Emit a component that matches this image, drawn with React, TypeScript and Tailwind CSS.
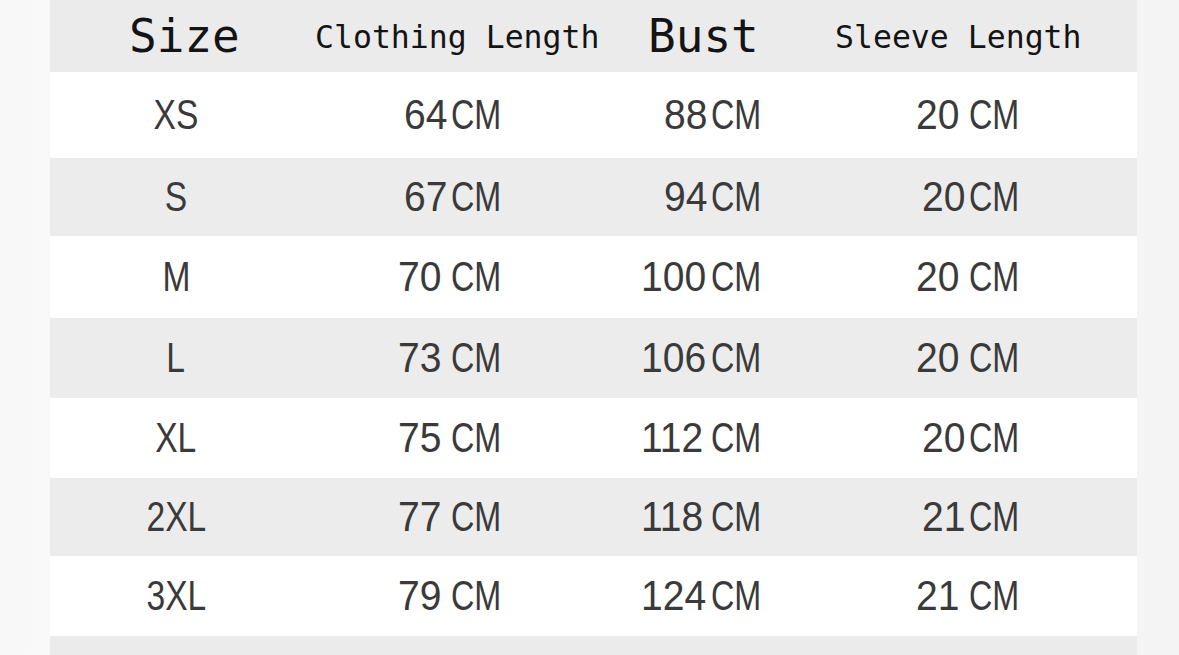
import React from 'react';

const rows = [
  { size: 'XS', len: ['64', false], bust: ['88', false], sleeve: ['20', true], h: 'h-[86px]', gray: false },
  { size: 'S', len: ['67', false], bust: ['94', false], sleeve: ['20', false], h: 'h-[78px]', gray: true },
  { size: 'M', len: ['70', true], bust: ['100', false], sleeve: ['20', true], h: 'h-[82px]', gray: false },
  { size: 'L', len: ['73', true], bust: ['106', false], sleeve: ['20', true], h: 'h-[80px]', gray: true },
  { size: 'XL', len: ['75', true], bust: ['112', false], sleeve: ['20', false], h: 'h-[80px]', gray: false },
  { size: '2XL', len: ['77', true], bust: ['118', false], sleeve: ['21', false], h: 'h-[78px]', gray: true },
  { size: '3XL', len: ['79', true], bust: ['124', false], sleeve: ['21', true], h: 'h-[80px]', gray: false },
] as const;

// no narrow face installed, so squeeze Liberation Sans horizontally
const Value = ({ v }: { v: readonly [string, boolean] }) => (
  <div className="flex justify-end whitespace-nowrap">
    <span className={`inline-block ${v[0].length > 2 ? 'w-[66px]' : 'w-[43px]'}`}>
      <span className="inline-block origin-left scale-x-[0.93]">{v[0]}</span>
    </span>
    <span className={`inline-block w-[51px] ${v[1] ? 'ml-[10px]' : 'ml-[4px]'}`}>
      <span className="inline-block origin-left scale-x-[0.77]">CM</span>
    </span>
  </div>
);

export default function App() {
  return (
    <div className="w-[1179px] h-[655px] overflow-hidden bg-gradient-to-r from-[#f8f8f8] via-white to-[#f4f4f4]">
      <div className="ml-[50px] w-[1087px]">
        <div className="flex items-center h-[72px] bg-[#ebebeb] text-[#141414] font-['DejaVu_Sans_Mono',monospace]">
          <div className="w-[265px] pl-[79px] text-[46px] leading-none">Size</div>
          <div className="w-[333px] text-[31.5px] leading-none pt-[4px]">Clothing Length</div>
          <div className="w-[187px] text-[46px] leading-none">Bust</div>
          <div className="text-[31.5px] leading-none pt-[4px]">Sleeve Length</div>
        </div>
        {rows.map((r) => (
          <div
            key={r.size}
            className={`flex items-center ${r.h} ${r.gray ? 'bg-[#ececec]' : 'bg-white'} text-[#3a3a3a] text-[42px] leading-none font-['Liberation_Sans',sans-serif]`}
          >
            <div className="w-[252px] text-center">
              <span className="inline-block scale-x-[0.8]">{r.size}</span>
            </div>
            <div className="w-[200px]">
              <Value v={r.len} />
            </div>
            <div className="w-[260px]">
              <Value v={r.bust} />
            </div>
            <div className="w-[258px]">
              <Value v={r.sleeve} />
            </div>
          </div>
        ))}
        <div className="h-[20px] bg-[#ebebeb]" />
      </div>
    </div>
  );
}
